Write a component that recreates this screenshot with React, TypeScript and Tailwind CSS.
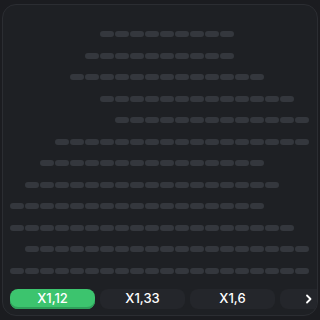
import React from 'react';

const rows: [number, number][] = [
  [6, 14],
  [5, 14],
  [4, 16],
  [6, 18],
  [7, 19],
  [3, 19],
  [2, 16],
  [1, 17],
  [0, 16],
  [0, 18],
  [1, 19],
  [0, 19],
];

const chips = ['X1,12', 'X1,33', 'X1,6'];

export default function App() {
  return (
    <div className="w-[320px] h-[320px] bg-[#1b1c20] pt-[4px] px-[2px] pb-[4px]" style={{ fontFamily: 'Inter, sans-serif' }}>
      <div className="h-full rounded-[14px] border border-[#2b2d32] bg-[#1e2024] overflow-hidden flex flex-col">
        <div className="flex flex-col gap-[15.5px] pt-[26px] pl-[7px]">
          {rows.map(([a, b], i) => (
            <div key={i} className="flex gap-[1px] h-[6px]">
              {Array.from({ length: 20 }).map((_, k) => (
                <div
                  key={k}
                  className={
                    k >= a && k <= b
                      ? 'w-[14px] h-[6px] rounded-full bg-[#34373d]'
                      : 'w-[14px] h-[6px]'
                  }
                />
              ))}
            </div>
          ))}
        </div>
        <div className="flex gap-[5px] pl-[7px] mt-[15px]">
          {chips.map((c, i) => (
            <div
              key={c}
              className={
                i === 0
                  ? 'shrink-0 w-[85px] h-[20px] rounded-[8px] bg-[#3cc46e] shadow-[inset_0_-2px_0_#2f9f5a] flex items-center justify-center text-white text-[13px] font-medium'
                  : 'shrink-0 w-[85px] h-[20px] rounded-[8px] bg-[#24262b] flex items-center justify-center text-white text-[13px] font-medium'
              }
            >
              {c}
            </div>
          ))}
          <div className="shrink-0 w-[85px] h-[20px] rounded-l-[8px] bg-[#24262b] flex items-center pl-[25px] text-white">
            <svg width="8" height="10" viewBox="0 0 8 10" fill="none">
              <path d="M2 1.5 L5.5 5 L2 8.5" stroke="white" strokeWidth="1.8" strokeLinecap="round" strokeLinejoin="round" />
            </svg>
          </div>
        </div>
      </div>
    </div>
  );
}
